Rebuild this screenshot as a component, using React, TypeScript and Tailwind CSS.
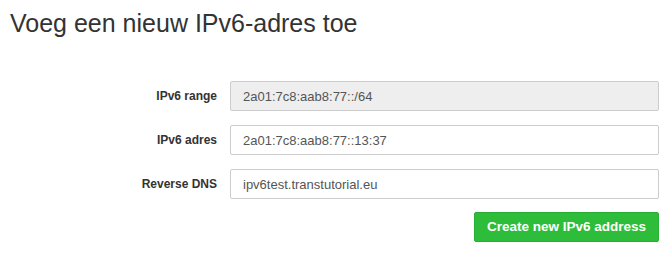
import React from "react";

const rows = [
  { label: "IPv6 range", value: "2a01:7c8:aab8:77::/64", disabled: true },
  { label: "IPv6 adres", value: "2a01:7c8:aab8:77::13:37", disabled: false },
  { label: "Reverse DNS", value: "ipv6test.transtutorial.eu", disabled: false },
];

export default function App() {
  return (
    <div className="w-[670px] h-[254px] bg-white font-['Liberation_Sans',Arial,sans-serif] text-[#333]">
      <h1 className="pl-[10px] pt-[8px] text-[25px] leading-[31px] font-normal text-[#333]">
        Voeg een nieuw IPv6-adres toe
      </h1>
      <div className="mt-[42px] flex flex-col gap-[14px] pr-[11px]">
        {rows.map((r) => (
          <div key={r.label} className="flex items-center">
            <label className="w-[217px] text-right text-[12px] font-bold text-[#333]">
              {r.label}
            </label>
            <div className="ml-[13px] flex-1">
              <input
                readOnly
                value={r.value}
                className={`w-full h-[30px] border border-[#ccc] rounded-[2px] px-[12px] text-[13px] text-[#555] outline-none ${
                  r.disabled ? "bg-[#eee]" : "bg-white"
                }`}
              />
            </div>
          </div>
        ))}
        <div className="flex justify-end -mt-[1px]">
          <button className="h-[30px] w-[185px] bg-[#2ebd3b] border border-[#29ae35] rounded-[2px] text-white text-[13.5px] font-bold">
            Create new IPv6 address
          </button>
        </div>
      </div>
    </div>
  );
}
